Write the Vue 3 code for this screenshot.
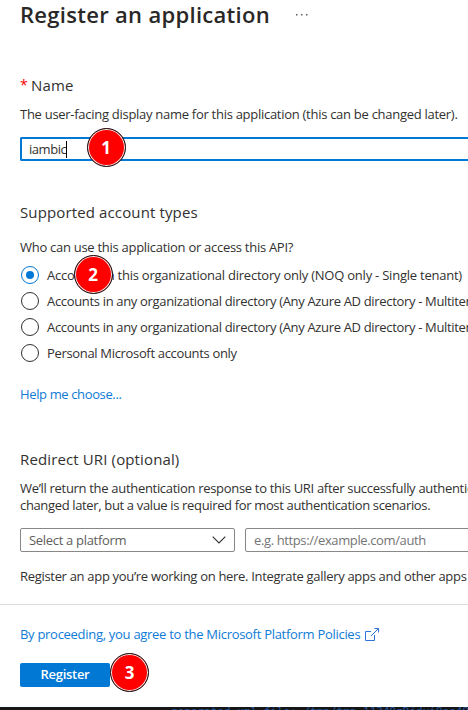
<script setup>
const accountTypes = [
  { label: 'Accounts in this organizational directory only (NOQ only - Single tenant)', selected: true },
  { label: 'Accounts in any organizational directory (Any Azure AD directory - Multitenant)', selected: false },
  { label: 'Accounts in any organizational directory (Any Azure AD directory - Multitenant)', selected: false },
  { label: 'Personal Microsoft accounts only', selected: false },
]
</script>

<template>
  <main class="page">
    <header class="title-row">
      <h1>Register an application</h1>
      <svg class="more" width="12" height="2" viewBox="0 0 12 2"><path d="M0 0h1.5v1.5H0zM5 0h1.5v1.5H5zM10 0h1.5v1.5H10z" fill="#605e5c" /></svg>
    </header>

    <section class="name">
      <h2><span class="required">*</span><span>Name</span></h2>
      <p>The user-facing display name for this application (this can be changed later).</p>
      <div class="name-input"><span>iambic</span><i class="caret"></i><b class="step step-one">1</b></div>
    </section>

    <section class="accounts">
      <h2>Supported account types</h2>
      <p>Who can use this application or access this API?</p>
      <div class="options">
        <div v-for="(type, i) in accountTypes" :key="i" class="option" :class="{ active: type.selected }">
          <i class="radio" :class="{ selected: type.selected }"></i>
          <span>{{ type.label }}</span>
        </div>
        <b class="step step-two">2</b>
      </div>
      <a class="help">Help me choose...</a>
    </section>

    <section class="redirect">
      <h2>Redirect URI (optional)</h2>
      <p>We’ll return the authentication response to this URI after successfully authenticating</p>
      <p class="wide">changed later, but a value is required for most authentication scenarios.</p>
      <div class="fields">
        <div class="field select">
          <span>Select a platform</span>
          <svg width="14" height="8" viewBox="0 0 14 8"><path d="M.7.7 7 7 13.3.7" fill="none" stroke="#323130" stroke-width="1.1" /></svg>
        </div>
        <div class="field uri">e.g. https://example.com/auth</div>
      </div>
      <p class="note">Register an app you’re working on here. Integrate gallery apps and other apps from</p>
    </section>

    <footer>
      <a class="policy"><span>By proceeding, you agree to the Microsoft Platform Policies</span>
        <svg width="14" height="14" viewBox="0 0 14 14"><path d="M6 3.5H.5v9h9V7M9.5.5h4v4M13.3.7 6 8" fill="none" stroke="#2f74d8" /></svg>
      </a>
      <div class="submit"><button>Register</button><b class="step">3</b></div>
    </footer>
    <div class="terminal">generated_xml_file: /tmp/tmp.11349zDjdui9ee49T.xml</div>
  </main>
</template>

<style>
body { margin: 0; background: #fff; }
</style>

<style scoped>
* { box-sizing: border-box; }
.page { width: 468px; height: 710px; overflow: hidden; display: flex; flex-direction: column; font: 13px/17px "Open Sans", sans-serif; letter-spacing: -0.31px; color: #323130; white-space: nowrap; }
h1, h2, p { margin: 0; }
i, b { font-style: normal; flex: none; }
.title-row { display: flex; height: 75px; padding-left: 20px; flex: none; }
h1 { width: 250px; font-size: 22px; line-height: 28px; font-weight: 600; letter-spacing: 0.3px; color: #292827; }
.more { margin: 14px 0 0 26px; }
h2 { font-size: 15px; line-height: 20px; font-weight: 400; letter-spacing: 0.13px; display: flex; }
section { padding-left: 20px; flex: none; }
.name { height: 127px; }
.required { color: #f00; width: 11px; font-size: 14px; }
.name p { margin-top: 11px; letter-spacing: -0.28px; }
.name-input { display: flex; align-items: center; margin-top: 14px; height: 24px; border: 2px solid #0078d4; border-right: 0; border-radius: 2px 0 0 2px; padding-left: 7px; position: relative; }
.name-input span { letter-spacing: -0.45px; }
.caret { width: 1px; height: 17px; background: #000; }
.step { width: 39px; height: 39px; border: 1px solid #111; border-radius: 50%; background: red; box-shadow: inset 0 0 0 1px #eee; color: #fff; font-size: 17px; font-weight: 700; letter-spacing: 0; display: flex; align-items: center; justify-content: center; }
.step-one { position: absolute; left: 64.5px; top: -11.5px; }
.accounts { height: 247px; }
.accounts p { margin-top: 17px; letter-spacing: -0.28px; }
.options { position: relative; display: flex; flex-direction: column; margin-top: 6px; }
.option { display: flex; height: 26px; align-items: center; gap: 8px; padding-left: 1px; letter-spacing: -0.33px; }
.active { letter-spacing: -0.23px; }
.radio { width: 18px; height: 18px; border: 1px solid #323130; border-radius: 50%; display: flex; align-items: center; justify-content: center; }
.selected { border-color: #0078d4; }
.selected::after { content: ""; width: 8px; height: 8px; border-radius: 50%; background: #0078d4; }
.step-two { position: absolute; left: 53.5px; top: -7px; }
a { color: #0f7bd6; }
.help { display: block; margin-top: 20px; letter-spacing: -0.37px; }
.redirect { height: 155px; }
.redirect h2 { margin-bottom: 11px; }
.redirect .wide { letter-spacing: -0.35px; }
.fields { display: flex; gap: 10px; margin-top: 14px; }
.field { height: 24px; border: 1px solid #8a8886; border-radius: 2px; padding: 0 8px; color: #605e5c; display: flex; align-items: center; justify-content: space-between; }
.select { width: 215px; flex: none; }
.uri { width: 250px; flex: none; color: #757575; letter-spacing: -0.38px; }
.note { margin-top: 16px; }
footer { border-top: 1px solid #dcdcdc; height: 103px; padding: 20px 0 0 20px; flex: none; }
.policy { display: flex; align-items: center; gap: 5px; height: 18px; letter-spacing: -0.29px; }
.policy svg { position: relative; top: 1px; }
.submit { display: flex; align-items: center; margin-top: 10px; }
button { margin-top: 4px; width: 90px; height: 24px; padding: 0 0 2px; border: 0; border-radius: 2px; background: #0078d4; color: #fff; font: 600 13px/22px "Open Sans", sans-serif; letter-spacing: -0.3px; }
.terminal { background: #161616; height: 3px; overflow: hidden; padding-left: 171px; color: #2456a0; font: 11px/10px "DejaVu Sans Mono", monospace; letter-spacing: 0; flex: none; }
</style>
